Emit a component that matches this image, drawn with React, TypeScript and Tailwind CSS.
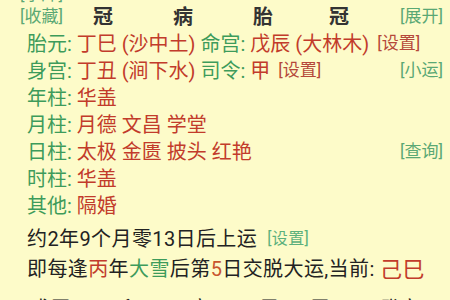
export default function App() {
  const font = "font-['Roboto','Noto_Sans_CJK_SC',sans-serif]";
  return (
    <div className={`w-[450px] h-[300px] overflow-hidden bg-[#fdfbc9] text-[#222] ${font}`}>
      <div className="-mt-[14px] flex flex-col">
        {/* cut-off top link */}
        <div className="h-[18px] flex items-center pl-[20px] text-[17px] text-[#5aa874]">[字库]</div>

        {/* header row */}
        <div className="h-[26px] flex items-center pl-[20px] pr-[7px]">
          <span className="w-[43px] text-[17px] text-[#5aa874] whitespace-nowrap">[收藏]</span>
          <span className="w-[80px] text-center text-[20px] font-bold text-[#333]">冠</span>
          <span className="w-[80px] text-center text-[20px] font-bold text-[#333]">病</span>
          <span className="w-[80px] text-center text-[20px] font-bold text-[#333]">胎</span>
          <span className="w-[72px] text-center text-[20px] font-bold text-[#333]">冠</span>
          <span className="flex-1 text-right text-[17px] text-[#5aa874]">[展开]</span>
        </div>

        <div className="h-[27px] flex items-center pl-[27px] pr-[7px] text-[20px] whitespace-nowrap">
          <span className="text-[#3d9b5b]">胎元:&nbsp;</span>
          <span className="text-[#c23b2b]">丁巳 (沙中土)&nbsp;</span>
          <span className="text-[#3d9b5b]">命宫:&nbsp;</span>
          <span className="text-[#c23b2b]">戊辰 (大林木)</span>
          <span className="ml-[8px] text-[17px] text-[#b5483a]">[设置]</span>
        </div>

        <div className="h-[27px] flex items-center pl-[27px] pr-[7px] text-[20px] whitespace-nowrap">
          <span className="text-[#3d9b5b]">身宫:&nbsp;</span>
          <span className="text-[#c23b2b]">丁丑 (涧下水)&nbsp;</span>
          <span className="text-[#3d9b5b]">司令:&nbsp;</span>
          <span className="text-[#c23b2b]">甲</span>
          <span className="ml-[8px] text-[17px] text-[#b5483a]">[设置]</span>
          <span className="ml-auto text-[17px] text-[#5aa874]">[小运]</span>
        </div>

        <div className="h-[27px] flex items-center pl-[27px] text-[20px]">
          <span className="text-[#3d9b5b]">年柱:&nbsp;</span>
          <span className="text-[#c23b2b]">华盖</span>
        </div>
        <div className="h-[27px] flex items-center pl-[27px] text-[20px]">
          <span className="text-[#3d9b5b]">月柱:&nbsp;</span>
          <span className="text-[#c23b2b]">月德 文昌 学堂</span>
        </div>
        <div className="h-[27px] flex items-center pl-[27px] pr-[7px] text-[20px]">
          <span className="text-[#3d9b5b]">日柱:&nbsp;</span>
          <span className="text-[#c23b2b]">太极 金匮 披头 红艳</span>
          <span className="ml-auto text-[17px] text-[#5aa874]">[查询]</span>
        </div>
        <div className="h-[27px] flex items-center pl-[27px] text-[20px]">
          <span className="text-[#3d9b5b]">时柱:&nbsp;</span>
          <span className="text-[#c23b2b]">华盖</span>
        </div>
        <div className="h-[27px] flex items-center pl-[27px] text-[20px]">
          <span className="text-[#3d9b5b]">其他:&nbsp;</span>
          <span className="text-[#c23b2b]">隔婚</span>
        </div>

        <div className="mt-[5px] h-[30px] flex items-center pl-[27px] text-[20px] text-[#222] tracking-[0.4px]">
          <span>约2年9个月零13日后上运</span>
          <span className="ml-[10px] text-[16px] text-[#5cb07c]">[设置]</span>
        </div>
        <div className="h-[30px] flex items-center pl-[27px] text-[20px] text-[#222] whitespace-nowrap tracking-[0.4px]">
          <span>即每逢</span>
          <span className="text-[#c23b2b]">丙</span>
          <span>年</span>
          <span className="text-[#3d9b5b]">大雪</span>
          <span>后第</span>
          <span className="text-[#c8552f]">5</span>
          <span>日交脱大运,当前:&nbsp;</span>
          <span className="text-[22px] text-[#c23b2b]">己巳</span>
        </div>

        {/* next table, cut off by the window */}
        <div className="mt-[10px] flex pl-[30px] gap-[30px] text-[20px] text-[#222]">
          <span>戊辰</span>
          <span>丁卯</span>
          <span>丙寅</span>
          <span>乙丑</span>
          <span>甲子</span>
          <span>癸亥</span>
        </div>
      </div>
    </div>
  );
}
